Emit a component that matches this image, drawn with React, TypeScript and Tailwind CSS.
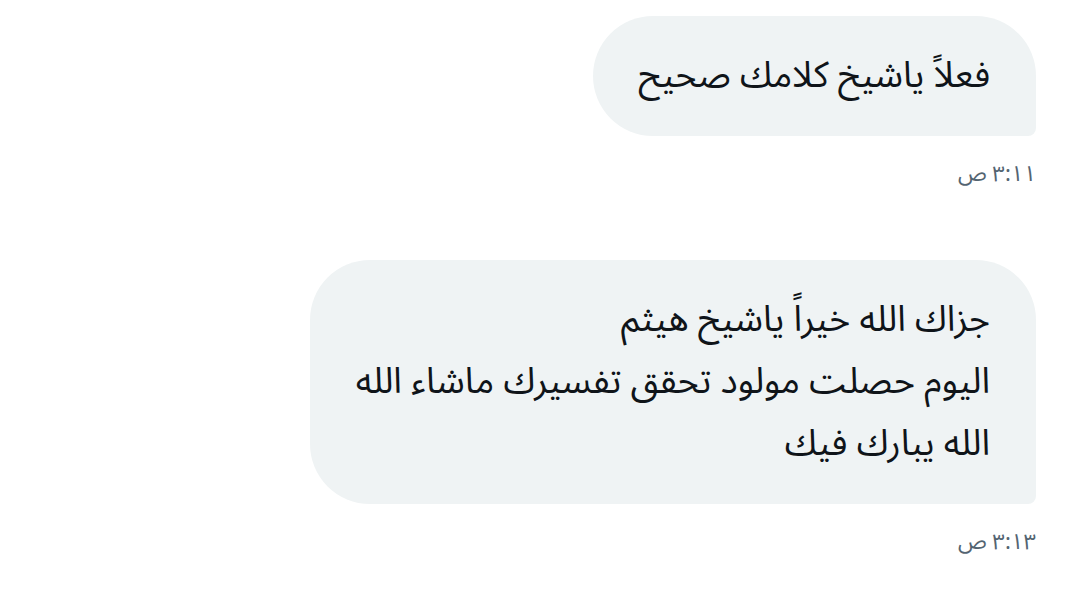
export default function App() {
  const bubble =
    'bg-[#eff3f4] text-[#0f1419] text-[36px] leading-[62px] py-[29px] pl-[46px] pr-[46px] rounded-[60px] rounded-br-[8px]'
  return (
    <div
      dir="rtl"
      className="w-[1080px] h-[591px] bg-white overflow-hidden pr-[44px] pt-[16px] flex flex-col items-start"
      style={{ fontFamily: '"Noto Sans Arabic", "DejaVu Sans", sans-serif' }}
    >
      <div className={bubble}>فعلاً ياشيخ كلامك صحيح</div>
      <div className="text-[22px] leading-[28px] text-[#536471] mt-[24px]">٣:١١ ص</div>

      <div className={`${bubble} mt-[72px]`}>
        <div>جزاك الله خيراً ياشيخ هيثم</div>
        <div>اليوم حصلت مولود تحقق تفسيرك ماشاء الله</div>
        <div>الله يبارك فيك</div>
      </div>
      <div className="text-[22px] leading-[28px] text-[#536471] mt-[24px]">٣:١٣ ص</div>
    </div>
  )
}
